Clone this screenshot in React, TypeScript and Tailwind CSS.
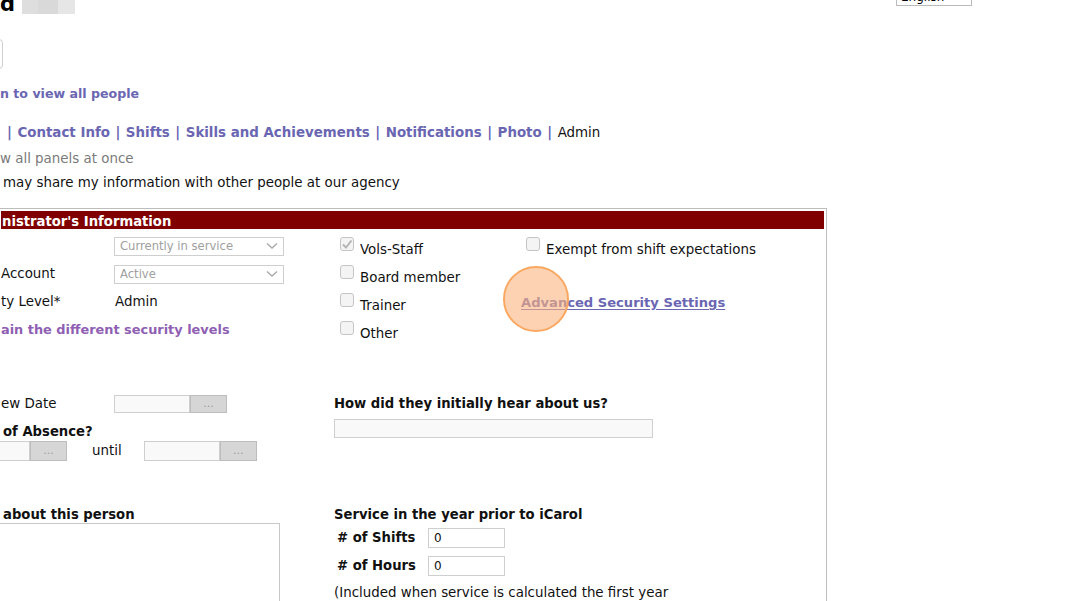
import React from 'react';

// ── Small controls ───────────────────────────────────────────────────────────

const LINK = 'text-[#6a66b2] font-bold';
const HEAD = 'font-bold text-[13.2px]';

function Chevron() {
    return (
        <svg width="12" height="8" viewBox="0 0 12 8" className="shrink-0">
            <path d="M1 1.5 L6 6 L11 1.5" fill="none" stroke="#aaa" strokeWidth="1.4" />
        </svg>
    );
}

function FakeSelect({ value }: { value: string }) {
    return (
        <div className="flex items-center justify-between w-[170px] h-[19px] border border-[#cfcfcf] bg-white pl-[5px] pr-[5px] text-[11.6px] text-[#a0a0a0]">
            <span>{value}</span>
            <Chevron />
        </div>
    );
}

function Box({ checked }: { checked?: boolean }) {
    return (
        <div className="w-[14px] h-[14px] rounded-[3px] border border-[#c4c4c4] bg-[#f4f4f4] flex items-center justify-center shrink-0">
            {checked && (
                <svg width="12" height="12" viewBox="0 0 12 12">
                    <path d="M2 6.5 L5 9.5 L10.5 2.5" fill="none" stroke="#b5b5b5" strokeWidth="2" />
                </svg>
            )}
        </div>
    );
}

function Check({ label, checked }: { label: string; checked?: boolean }) {
    return (
        <div className="flex items-start h-[28px]">
            <div className="mt-[-5px]"><Box checked={checked} /></div>
            <span className="ml-[6px] leading-[16px]">{label}</span>
        </div>
    );
}

function DateInput({ w = 76, h = 18 }: { w?: number; h?: number }) {
    return (
        <div className="flex">
            <div className="border border-[#cfcfcf] bg-[#f9f9f9]" style={{ width: w, height: h }} />
            <div className="w-[37px] border border-[#bdbdbd] bg-[#d6d6d6] text-[#9a9a9a] text-[11px] flex items-center justify-center" style={{ height: h }}>...</div>
        </div>
    );
}

function NumInput() {
    return (
        <div className="w-[77px] h-[20px] border border-[#cfcfcf] bg-white text-[12px] pl-[5px] leading-[18px]">0</div>
    );
}

// ── App ──────────────────────────────────────────────────────────────────────

export default function App() {
    return (
        <div className="relative w-[1075px] h-[601px] overflow-hidden bg-white text-[13.4px] text-[#111] leading-[16px]" style={{ fontFamily: '"DejaVu Sans", Verdana, sans-serif' }}>
            {/* title row */}
            <div className="flex items-start h-[22px]">
                <h1 className="text-[21px] font-bold leading-[20px] mt-[-6px] text-black">d</h1>
                <div className="ml-[7px] w-[53px] h-[14px] flex">
                    <div className="w-[16px] bg-[#dedede]" />
                    <div className="w-[20px] bg-[#d9d9d9]" />
                    <div className="flex-1 bg-[#e6e6e6]" />
                </div>
                <div className="ml-auto mr-[103px] mt-[-15px] w-[76px] h-[21px] border border-[#bbb] bg-white flex items-end justify-between px-[4px] text-[12px] text-black">
                    <span className="leading-[12px] mb-[2px]">English</span>
                    <span className="text-[8px] text-[#999] mb-[4px]">▼</span>
                </div>
            </div>

            {/* search button (cut off) */}
            <div className="mt-[17px] ml-[-57px] w-[60px] h-[30px] border border-[#cfcfcf] rounded-[4px] bg-white" />

            <div className="mt-[17px]"><a className="text-[#6a66b2] font-bold text-[12.6px]">n to view all people</a></div>

            {/* panel nav */}
            <div className="mt-[23px] flex gap-[5.5px] text-[#6a66b2]">
                <span className="ml-[7px] font-bold">|</span>
                <span className={LINK}>Contact Info</span><span className="font-bold">|</span>
                <span className={LINK}>Shifts</span><span className="font-bold">|</span>
                <span className={LINK}>Skills and Achievements</span><span className="font-bold">|</span>
                <span className={LINK}>Notifications</span><span className="font-bold">|</span>
                <span className={LINK}>Photo</span><span className="font-bold">|</span>
                <span className="text-[#111]">Admin</span>
            </div>
            <div className="mt-[10px] text-[#7a7a7a]">w all panels at once</div>
            <div className="mt-[8px] ml-[3px]">may share my information with other people at our agency</div>

            {/* admin panel */}
            <div className="mt-[17px] ml-[-2px] w-[829px] border border-[#bdbdbd] p-[2px] pb-0 h-[420px]">
                <div className="h-[18px] bg-[#800000] text-white font-bold text-[13.2px] leading-[21px] pl-[1px] overflow-visible">nistrator's Information</div>

                <div className="flex">
                    <div className="w-[333px] pt-[3px]">
                        <div className="flex items-center h-[28px]">
                            <span className="w-[113px]" />
                            <FakeSelect value="Currently in service" />
                        </div>
                        <div className="flex items-center h-[28px]">
                            <span className="w-[113px]">Account</span>
                            <FakeSelect value="Active" />
                        </div>
                        <div className="flex items-center h-[28px]">
                            <span className="w-[114px]">ty Level*</span>
                            <span>Admin</span>
                        </div>
                        <div className="flex items-center h-[28px]">
                            <a className="text-[#8f5fb3] font-bold text-[12.9px]">ain the different security levels</a>
                        </div>
                    </div>

                    <div className="w-[186px] pt-[13px] pl-[6px]">
                        <Check label="Vols-Staff" checked />
                        <Check label="Board member" />
                        <Check label="Trainer" />
                        <Check label="Other" />
                    </div>

                    <div className="pt-[13px]">
                        <div className="ml-[6px]"><Check label="Exempt from shift expectations" /></div>
                        <div className="mt-[25px] ml-[1px]">
                            <a className="text-[#6a66b2] font-bold text-[13.1px] underline underline-offset-2">Advanced Security Settings</a>
                        </div>
                    </div>
                </div>

                <div className="flex mt-[41px]">
                    <div className="w-[333px]">
                        <div className="flex items-center">
                            <span className="w-[113px]">ew Date</span>
                            <DateInput />
                        </div>
                        <div className={`mt-[11px] ml-[2px] ${HEAD}`}>of Absence?</div>
                        <div className="flex items-center mt-[1px]">
                            <div className="ml-[-47px]"><DateInput w={76} h={20} /></div>
                            <span className="ml-[25px]">until</span>
                            <div className="ml-[22px]"><DateInput w={76} h={20} /></div>
                        </div>
                        <div className={`mt-[46px] ml-[2px] ${HEAD}`}>about this person</div>
                        <div className="mt-[0px] ml-[-60px] w-[339px] h-[100px] border border-[#c8c8c8] bg-white" />
                    </div>

                    <div className="mt-[1px]">
                        <div className={HEAD}>How did they initially hear about us?</div>
                        <div className="mt-[7px] w-[319px] h-[19px] border border-[#cfcfcf] bg-[#f9f9f9]" />
                        <div className={`mt-[69px] ${HEAD}`}>Service in the year prior to iCarol</div>
                        <div className="flex items-center mt-[5px] ml-[3px]">
                            <span className={`w-[91px] ${HEAD}`}>#&nbsp;of Shifts</span>
                            <NumInput />
                        </div>
                        <div className="flex items-center mt-[8px] ml-[3px]">
                            <span className={`w-[91px] ${HEAD}`}>#&nbsp;of Hours</span>
                            <NumInput />
                        </div>
                        <div className="mt-[9px]">(Included when service is calculated the first year</div>
                    </div>
                </div>
            </div>

            {/* click highlight */}
            <div className="absolute left-[503px] top-[266px] w-[66px] h-[66px] rounded-full border-2 border-[#f9a862] bg-[#fbb47e]/60" />
        </div>
    );
}
